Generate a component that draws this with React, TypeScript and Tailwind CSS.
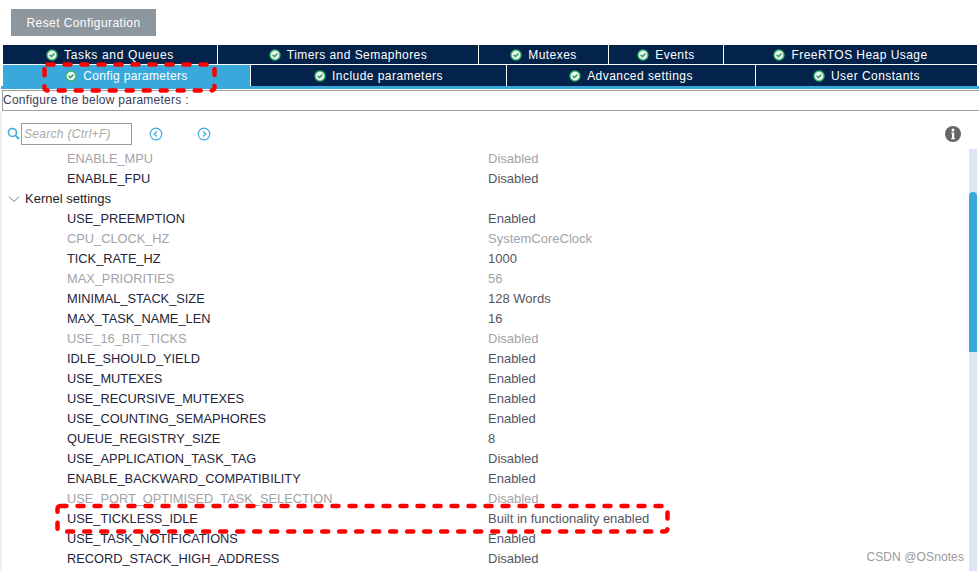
import React from "react";

const CheckIcon = () => (
  <svg width="12" height="12" viewBox="0 0 12 12" className="shrink-0">
    <circle cx="6" cy="6" r="5.7" fill="#3cb371" />
    <circle cx="6" cy="6" r="4.3" fill="#eaf6ef" />
    <path d="M3.6 5.8 L5.4 7.6 L8.4 4.6" fill="none" stroke="#3a9d6a" strokeWidth="1.5" />
  </svg>
);

const Tab = ({ w, label, active, grow, spacing }: { w: string; label: string; active?: boolean; grow?: boolean; spacing?: string }) => (
  <div
    className={`${w} ${grow ? "grow" : "shrink-0"} h-full flex items-center justify-center gap-[6px] border-r border-white last:border-r-0 text-white ${active ? "bg-[#39a9dc]" : "bg-[#03234b]"}`}
  >
    <CheckIcon />
    <span className={spacing ?? "tracking-[0.45px]"}>{label}</span>
  </div>
);

type Row = { name: string; value: string; dim?: boolean; group?: boolean };

const rows: Row[] = [
  { name: "ENABLE_MPU", value: "Disabled", dim: true },
  { name: "ENABLE_FPU", value: "Disabled" },
  { name: "Kernel settings", value: "", group: true },
  { name: "USE_PREEMPTION", value: "Enabled" },
  { name: "CPU_CLOCK_HZ", value: "SystemCoreClock", dim: true },
  { name: "TICK_RATE_HZ", value: "1000" },
  { name: "MAX_PRIORITIES", value: "56", dim: true },
  { name: "MINIMAL_STACK_SIZE", value: "128 Words" },
  { name: "MAX_TASK_NAME_LEN", value: "16" },
  { name: "USE_16_BIT_TICKS", value: "Disabled", dim: true },
  { name: "IDLE_SHOULD_YIELD", value: "Enabled" },
  { name: "USE_MUTEXES", value: "Enabled" },
  { name: "USE_RECURSIVE_MUTEXES", value: "Enabled" },
  { name: "USE_COUNTING_SEMAPHORES", value: "Enabled" },
  { name: "QUEUE_REGISTRY_SIZE", value: "8" },
  { name: "USE_APPLICATION_TASK_TAG", value: "Disabled" },
  { name: "ENABLE_BACKWARD_COMPATIBILITY", value: "Enabled" },
  { name: "USE_PORT_OPTIMISED_TASK_SELECTION", value: "Disabled", dim: true },
  { name: "USE_TICKLESS_IDLE", value: "Built in functionality enabled" },
  { name: "USE_TASK_NOTIFICATIONS", value: "Enabled" },
  { name: "RECORD_STACK_HIGH_ADDRESS", value: "Disabled" },
];

const NavCircle = ({ d }: { d: string }) => (
  <svg width="14" height="14" viewBox="0 0 14 14">
    <circle cx="7" cy="7" r="5.8" fill="none" stroke="#39a9dc" strokeWidth="1.2" />
    <path d={d} fill="none" stroke="#39a9dc" strokeWidth="1.3" />
  </svg>
);

export default function App() {
  return (
    <div className="relative w-[979px] h-[571px] overflow-hidden bg-white text-[12px] font-['Liberation_Sans',Arial,sans-serif]">
      <div className="pl-[11px] pt-[9px]">
        <button className="w-[145px] h-[27px] bg-[#8f979e] text-white tracking-[0.42px] block">Reset Configuration</button>
      </div>

      <div className="ml-[3px] mr-[2px] mt-[9px]">
        <div className="flex h-[19px] leading-none">
          <Tab w="w-[215px]" spacing="tracking-[0.65px]" label="Tasks and Queues" />
          <Tab w="w-[261px]" label="Timers and Semaphores" />
          <Tab w="w-[130px]" label="Mutexes" />
          <Tab w="w-[115px]" label="Events" />
          <Tab w="" grow label="FreeRTOS Heap Usage" />
        </div>
        <div className="flex h-[21px] mt-px leading-none">
          <Tab w="w-[248px]" active spacing="tracking-[0.33px]" label="Config parameters" />
          <Tab w="w-[256px]" label="Include parameters" />
          <Tab w="w-[249px]" label="Advanced settings" />
          <Tab w="" grow label="User Constants" />
        </div>
      </div>
      <div className="ml-[1px] h-[3px] bg-[#39a9dc]" />

      <div className="ml-[2px] mt-px h-[21px] border-y border-l border-[#9aa0a6] flex items-center pb-[2px] text-[#3c3c5a] tracking-[0.26px]">
        Configure the below parameters :
      </div>

      <div className="flex">
        <div className="w-[2px] bg-[#eeeeee] self-stretch shrink-0" />
        <div className="flex-1 min-w-0">
          <div className="relative h-[38px] flex items-center pl-[5px] pt-[7px]">
            <svg width="13" height="13" viewBox="0 0 13 13" className="shrink-0">
              <circle cx="5.4" cy="5.4" r="4" fill="none" stroke="#39a9dc" strokeWidth="1.5" />
              <path d="M8.4 8.4 L12 12" stroke="#39a9dc" strokeWidth="1.8" />
            </svg>
            <div className="ml-px w-[111px] h-[22px] border border-[#9b9b9b] pl-[2px] flex items-center italic text-[#a8a8a8] tracking-[0.3px]">
              Search (Ctrl+F)
            </div>
            <div className="ml-[17px] flex gap-[34px]">
              <NavCircle d="M8 4.4 L5.3 7 L8 9.6" />
              <NavCircle d="M6 4.4 L8.7 7 L6 9.6" />
            </div>
            <svg width="16" height="16" viewBox="0 0 16 16" className="absolute right-[18px] top-[15px]">
              <circle cx="8" cy="8" r="8" fill="#666666" />
              <circle cx="8" cy="4" r="1.5" fill="#fff" />
              <path d="M6.3 6.6 H9.2 V12 H10 V13.2 H6.2 V12 H7 V7.8 H6.3 Z" fill="#fff" />
            </svg>
          </div>

          <div className="flex">
            <div className="flex-1 min-w-0 pb-5">
              {rows.map((r) =>
                r.group ? (
                  <div key={r.name} className="h-5 flex items-center pl-[6px] text-[13px] text-[#1c1c28]">
                    <svg width="12" height="12" viewBox="0 0 12 12" className="shrink-0">
                      <path d="M1 3.5 L6 8.5 L11 3.5" fill="none" stroke="#777" strokeWidth="1" />
                    </svg>
                    <span className="ml-[5px]">{r.name}</span>
                  </div>
                ) : (
                  <div key={r.name} className={`h-5 flex items-center ${r.dim ? "text-[#a3a3a8]" : "text-[#24243a]"}`}>
                    <div className="w-[486px] pl-[65px] shrink-0 text-[12.8px]">{r.name}</div>
                    <div className={r.dim ? "text-[13px]" : "text-[13px] text-[#55555f]"}>{r.value}</div>
                  </div>
                ),
              )}
            </div>
            <div className="w-2 mr-[2px] shrink-0 self-stretch bg-[#d9e7f4] pt-[43px]">
              <div className="w-2 h-40 rounded-t-[4px] bg-[#39a9dc]" />
            </div>
          </div>
        </div>
      </div>

      <svg width="979" height="571" className="absolute inset-0 pointer-events-none">
        <rect x="44.5" y="64.5" width="170" height="26" rx="3" fill="none" stroke="#ff0000" strokeWidth="4.5" strokeLinecap="round" strokeDasharray="6 11" />
        <rect x="57.5" y="506" width="610" height="25.5" rx="3" fill="none" stroke="#ff0000" strokeWidth="4.5" strokeLinecap="round" strokeDasharray="6 11" />
      </svg>
      <div className="absolute right-[15px] top-[548px] text-[#9a9a9a] tracking-[0.1px]">CSDN @OSnotes</div>
    </div>
  );
}
